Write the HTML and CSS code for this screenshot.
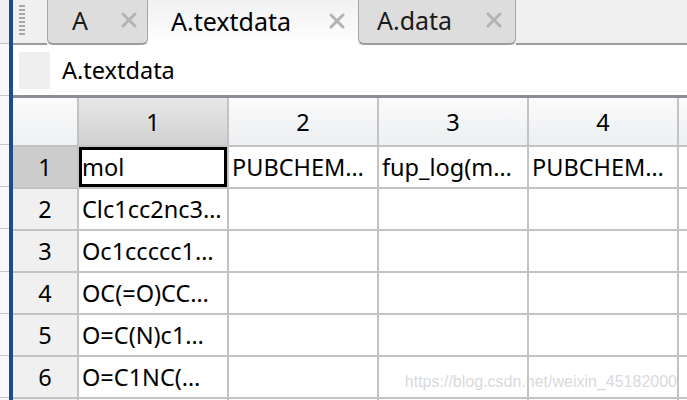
FILE: index.html
```html
<!DOCTYPE html>
<html>
<head>
<meta charset="utf-8">
<link rel="stylesheet" href="styles.css">
</head>
<body>
<div class="app">
  <div class="side">
    <div class="seg h44"></div>
    <div class="seg h52"></div>
    <div class="seg h49"></div>
    <div class="seg h42"></div>
    <div class="seg h42"></div>
    <div class="seg h43"></div>
    <div class="seg h42"></div>
    <div class="seg h42"></div>
    <div class="seg h42"></div>
  </div>
  <div class="accent"></div>
  <div class="main">
    <div class="tabbar">
      <div class="grip"><span class="grip-dots"></span></div>
      <div class="tab tab-a"><span class="tab-label">A</span><svg class="close" viewBox="0 0 18 18"><path d="M3 3 L15 15 M15 3 L3 15"/></svg></div>
      <div class="tab active tab-t"><span class="tab-label">A.textdata</span><svg class="close" viewBox="0 0 18 18"><path d="M3 3 L15 15 M15 3 L3 15"/></svg></div>
      <div class="tab tab-d"><span class="tab-label">A.data</span><svg class="close" viewBox="0 0 18 18"><path d="M3 3 L15 15 M15 3 L3 15"/></svg></div>
      <div class="tabfill"></div>
    </div>
    <div class="panel">
      <span class="panel-icon"></span>
      <span class="panel-title">A.textdata</span>
    </div>
    <div class="divider"></div>
    <div class="sheet">
      <div class="corner"></div>
      <div class="colhead sel">1</div>
      <div class="colhead">2</div>
      <div class="colhead">3</div>
      <div class="colhead">4</div>
      <div class="colhead"></div>

      <div class="rowhead sel">1</div>
      <div class="cell current">mol</div>
      <div class="cell">PUBCHEM…</div>
      <div class="cell">fup_log(m…</div>
      <div class="cell">PUBCHEM…</div>
      <div class="cell"></div>

      <div class="rowhead">2</div>
      <div class="cell">Clc1cc2nc3…</div>
      <div class="cell"></div><div class="cell"></div><div class="cell"></div><div class="cell"></div>

      <div class="rowhead">3</div>
      <div class="cell">Oc1ccccc1…</div>
      <div class="cell"></div><div class="cell"></div><div class="cell"></div><div class="cell"></div>

      <div class="rowhead">4</div>
      <div class="cell">OC(=O)CC…</div>
      <div class="cell"></div><div class="cell"></div><div class="cell"></div><div class="cell"></div>

      <div class="rowhead">5</div>
      <div class="cell">O=C(N)c1…</div>
      <div class="cell"></div><div class="cell"></div><div class="cell"></div><div class="cell"></div>

      <div class="rowhead">6</div>
      <div class="cell">O=C1NC(…</div>
      <div class="cell"></div><div class="cell"></div><div class="cell"></div><div class="cell"></div>

      <div class="rowhead"></div>
      <div class="cell"></div>
      <div class="cell"></div><div class="cell"></div><div class="cell"></div><div class="cell"></div>
    </div>
  </div>
  <div class="watermark">https://blog.csdn.net/weixin_45182000</div>
</div>
</body>
</html>
```

FILE: styles.css
```css
html, body {
  margin: 0;
  padding: 0;
  background: #ffffff;
}

.app {
  position: relative;
  display: flex;
  width: 687px;
  height: 400px;
  overflow: hidden;
  font-family: "Noto Sans", "Open Sans", sans-serif;
  color: #000;
}

.side {
  width: 9px;
  flex: none;
  display: flex;
  flex-direction: column;
  background: #f8f8f8;
}

.seg {
  box-sizing: border-box;
  border-bottom: 1px solid #c6c6c6;
  flex: none;
}
.seg.h44 { height: 44px; background: #f0f0f0; }
.seg.h52 { height: 52px; }
.seg.h49 { height: 49px; }
.seg.h43 { height: 43px; }
.seg.h42 { height: 42px; }

.accent {
  width: 4px;
  flex: none;
  background: #1c4c8c;
}

.main {
  flex: 1;
  min-width: 0;
  display: flex;
  flex-direction: column;
  overflow: hidden;
}

/* Tab bar */
.tabbar {
  display: flex;
  height: 45px;
  flex: none;
  background: #f0f0f0;
}

.grip {
  box-sizing: border-box;
  width: 34px;
  flex: none;
  border-bottom: 2px solid #9c9c9c;
  padding: 5px 0 0 6px;
}

.grip-dots {
  display: block;
  width: 6px;
  height: 30px;
  background: repeating-linear-gradient(to bottom, #a8a8a8 0 2px, transparent 2px 4px);
}

.tab {
  box-sizing: border-box;
  flex: none;
  display: flex;
  align-items: center;
  padding-bottom: 3px;
  background: #dddddd;
  border: 1px solid #a6a6a6;
  border-top: none;
  border-bottom: 2px solid #9c9c9c;
  border-radius: 0 0 6px 6px;
  font-size: 25px;
  color: #1a1a1a;
}

.tab .close {
  width: 18px;
  height: 18px;
  margin-left: auto;
  fill: none;
  stroke: #b3b3b3;
  stroke-width: 3;
  stroke-linecap: round;
}

.tab-a { width: 101px; padding-left: 24px; padding-right: 9px; }
.tab-t { width: 210px; padding-left: 23px; padding-right: 12px; }
.tab-d { width: 158px; padding-left: 18px; padding-right: 12px; }

.tab.active {
  background: linear-gradient(to bottom, #f1f1f3 0%, #ffffff 100%);
  border: none;
  border-radius: 0;
  color: #000;
}

.tabfill {
  flex: 1;
  border-bottom: 2px solid #9c9c9c;
}

/* Title panel */
.panel {
  height: 50px;
  flex: none;
  display: flex;
  align-items: center;
  gap: 12px;
  padding-left: 6px;
  background: #ffffff;
}

.panel-icon {
  width: 31px;
  height: 37px;
  background: #efefef;
}

.panel-title {
  font-size: 23.5px;
}

.divider {
  height: 3px;
  flex: none;
  background: #8b8f95;
}

/* Spreadsheet */
.sheet {
  display: grid;
  grid-template-columns: 64px repeat(5, 148px);
  grid-template-rows: 47px repeat(7, 40px);
  gap: 2px;
  background: #c3c3c3;
  font-size: 23.5px;
}

.corner {
  background: linear-gradient(to bottom, #fbfbfb, #eef0f2);
}

.colhead {
  display: flex;
  align-items: center;
  justify-content: center;
  background: linear-gradient(to bottom, #fbfbfb, #eceef1);
}

.colhead.sel {
  background: linear-gradient(to bottom, #e8e8e8, #d0d0d0);
}

.rowhead {
  display: flex;
  align-items: center;
  justify-content: center;
  background: #f0f0f0;
}

.rowhead.sel {
  background: #cccccc;
}

.cell {
  display: flex;
  align-items: center;
  padding-left: 3px;
  background: #ffffff;
  white-space: nowrap;
  overflow: hidden;
}

.cell.current {
  box-shadow: inset 0 0 0 3px #000;
}

.watermark {
  position: absolute;
  right: 10px;
  bottom: 9px;
  font-family: "Liberation Sans", Arial, sans-serif;
  font-size: 16px;
  color: rgba(200, 200, 200, 0.7);
}
```
